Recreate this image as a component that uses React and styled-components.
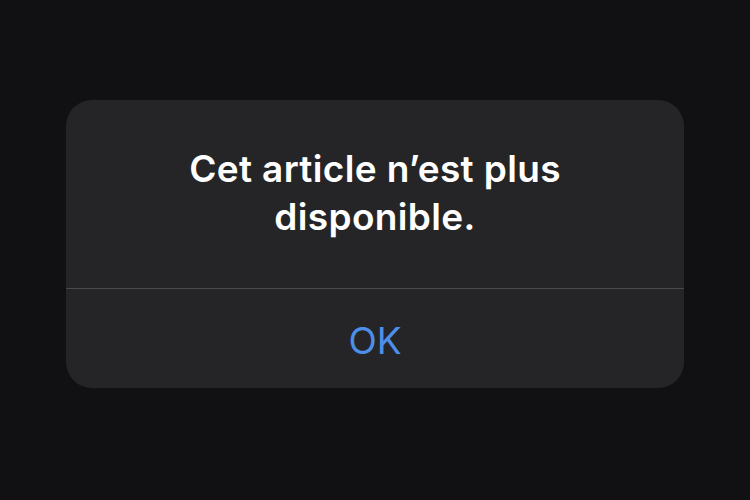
import React from "react";
import styled, { createGlobalStyle } from "styled-components";

const GlobalStyle = createGlobalStyle`
  html, body {
    margin: 0;
    padding: 0;
    background: #111113;
  }
  body {
    font-family: Inter, "Noto Sans", "Liberation Sans", sans-serif;
    -webkit-font-smoothing: antialiased;
  }
`;

const Screen = styled.div`
  width: 750px;
  height: 500px;
  background: #111113;
  display: flex;
  justify-content: center;
  padding-top: 100px;
  box-sizing: border-box;
`;

const Alert = styled.div`
  width: 618px;
  height: 288px;
  background: #252527;
  border-radius: 26px;
  display: flex;
  flex-direction: column;
  overflow: hidden;
`;

const Message = styled.div`
  height: 189px;
  display: flex;
  align-items: center;
  justify-content: center;
  padding: 0 40px 2px;
  box-sizing: border-box;
  border-bottom: 1px solid #4a4a4d;
`;

const Title = styled.h2`
  margin: 0;
  color: #ffffff;
  font-size: 37px;
  font-weight: 600;
  line-height: 48px;
  text-align: center;
  letter-spacing: 0.35px;
`;

const Actions = styled.div`
  flex: 1;
  display: flex;
`;

const ActionButton = styled.button`
  flex: 1;
  border: none;
  background: transparent;
  color: #4d8fe8;
  font-family: inherit;
  font-size: 37px;
  font-weight: ${(p) => (p.$bold ? 600 : 400)};
  padding: 4px 0 0;
  cursor: pointer;
`;

const App = () => (
  <>
    <GlobalStyle />
    <Screen>
      <Alert>
        <Message>
          <Title>
            Cet article n’est plus
            <br />
            disponible.
          </Title>
        </Message>
        <Actions>
          <ActionButton>OK</ActionButton>
        </Actions>
      </Alert>
    </Screen>
  </>
);

export default App;
